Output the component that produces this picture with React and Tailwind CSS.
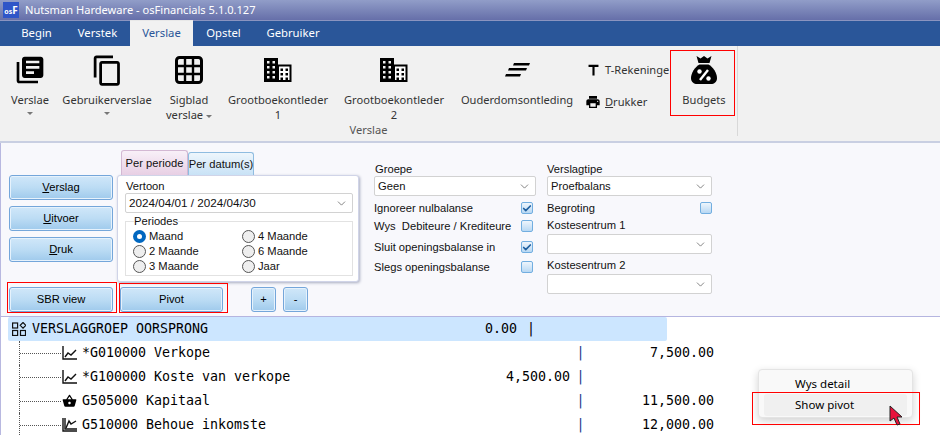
import { ChevronDown, Check } from 'lucide-react'
import { MdLibraryBooks, MdOutlineContentCopy, MdPrint, MdShoppingBasket, MdTitle } from 'react-icons/md'

function BuildingIcon() {
  return (
    <svg width="28" height="24" viewBox="0 0 28 24">
      <path fillRule="evenodd" fill="#000" d="M0 0h14v24H0zM3 3v2.500h2.500V3zm5.500 0v2.500H11V3zM3 8v2.500h2.500V8zm5.500 0v2.500H11V8zM3 13v2.500h2.500V13zm5.500 0v2.500H11V13zM3 18v2.500h2.500V18zm5.500 0v2.500H11V18z" />
      <path fill="#fff" stroke="#000" strokeWidth="2" d="M14 7.500h12.500V23H14z" />
      <path fill="#000" d="M16.500 10.500H19V13h-2.500zM21.500 10.500H24V13h-2.500zM16.500 15H19v2.500h-2.500zM21.500 15H24v2.500h-2.500zM16.500 19.500H19V22h-2.500zM21.500 19.500H24V22h-2.500z" />
    </svg>
  )
}

function GridIcon() {
  return (
    <svg width="28" height="28" viewBox="0 0 28 28">
      <rect x="1.500" y="1.500" width="25" height="25" rx="3" fill="none" stroke="#000" strokeWidth="3" />
      <path d="M10 1v26M18 1v26M1 10h26M1 18h26" stroke="#000" strokeWidth="2.400" />
    </svg>
  )
}

function AgingIcon() {
  return (
    <svg width="25" height="14" viewBox="0 0 25 14" fill="#000">
      <path d="M9 0h16l-1 2.500H8zM4 5h18l-1 2.500H3zM1 11h15l-1 2.500H0z" />
    </svg>
  )
}

function BudgetBag() {
  return (
    <svg width="26" height="28" viewBox="0 0 26 28">
      <path d="M5.500 0l4 2.500L13 0l3.500 2.500 4-2.500-2 7h-11z" fill="#000" />
      <path d="M8.500 8.500h9C22 11 26 17 26 22c0 4-3 6-6 6H6c-3 0-6-2-6-6 0-5 4-11 8.500-13.500z" fill="#000" />
      <path d="M9 24l8-10" stroke="#fff" strokeWidth="2.400" />
      <circle cx="8.500" cy="15.500" r="2.200" fill="#fff" />
      <circle cx="17.500" cy="22.500" r="2.200" fill="#fff" />
    </svg>
  )
}

function TreeChart({ steep }) {
  return (
    <svg width="15" height="14" viewBox="0 0 15 14" fill="none" stroke="#111" strokeWidth="1.400">
      <path d={steep ? 'M1 0v13h14M3 0v11h12' : 'M1 0v13h14'} />
      <path d={steep ? 'M4 10l3-7 2 3 5-3' : 'M3 11l3-4 3 2 5-5'} />
    </svg>
  )
}

function GroupIcon() {
  return (
    <svg width="14" height="14" viewBox="0 0 14 14" fill="none" stroke="#111" strokeWidth="1.200">
      <rect x="0.600" y="1" width="5" height="5" />
      <rect x="0.600" y="8.500" width="5" height="5" />
      <rect x="8.500" y="8.500" width="5" height="5" />
      <path d="M11 0.500l2.800 2.800L11 6.100 8.200 3.300z" />
    </svg>
  )
}

function RibbonItem({ w, icon, label, second, caret }) {
  return (
    <div className={`${w} shrink-0 flex flex-col items-center pt-[9px]`}>
      <div className="h-[30px] flex items-center justify-center">{icon}</div>
      <div className="mt-[7px] leading-[15px] text-center whitespace-nowrap">{label}</div>
      {second && <div className="leading-[15px] text-center whitespace-nowrap">{second}</div>}
      {caret && <div className="mt-[5px] w-0 h-0 border-x-[3px] border-x-transparent border-t-[3px] border-t-[#777]" />}
    </div>
  )
}

function BlueButton({ className, children }) {
  return (
    <button className={`${className} h-[25px] shrink-0 rounded-[3px] border border-[#74a6da] bg-linear-to-b from-[#d0e7f9] via-[#bcdcf4] to-[#9fcaec] text-center text-black shadow-[inset_0_0_0_1px_#e6f2fc]`}>
      {children}
    </button>
  )
}

function Combo({ w, className, children }) {
  return (
    <div className={`${w} ${className ?? ''} h-[20px] flex items-center justify-between bg-white border border-[#d2d2d2] rounded-[2px] pl-[3px] pr-[4px]`}>
      <span className="whitespace-nowrap">{children}</span>
      <ChevronDown size={13} strokeWidth={1.200} color="#444" />
    </div>
  )
}

function Radio({ on, children }) {
  return (
    <div className="h-[15px] flex items-center gap-[3px]">
      {on ? (
        <span className="w-[13px] h-[13px] rounded-full bg-[#0067c0] flex items-center justify-center">
          <span className="w-[5px] h-[5px] rounded-full bg-white" />
        </span>
      ) : (
        <span className="w-[13px] h-[13px] rounded-full border border-[#555] bg-[#eeeeee]" />
      )}
      <span>{children}</span>
    </div>
  )
}

function CheckBox({ on }) {
  return (
    <span className="w-[12px] h-[12px] shrink-0 rounded-[2px] border border-[#72aee0] bg-linear-to-b from-[#eef5fc] to-[#b8d8f3] flex items-center justify-center">
      {on && <Check size={11} strokeWidth={4} color="#1f5f9f" />}
    </span>
  )
}

function CheckRow({ label, on, h, w }) {
  return (
    <div className={`${h} ${w} flex items-center justify-between whitespace-pre`}>
      <span>{label}</span>
      <CheckBox on={on} />
    </div>
  )
}

const rows = [
  { icon: <TreeChart />, name: '*G010000 Verkope', debit: '', credit: '7,500.00' },
  { icon: <TreeChart />, name: '*G100000 Koste van verkope', debit: '4,500.00', credit: '' },
  { icon: <MdShoppingBasket size={16} color="#000" />, name: 'G505000 Kapitaal', debit: '', credit: '11,500.00' },
  { icon: <TreeChart steep />, name: 'G510000 Behoue inkomste', debit: '', credit: '12,000.00' },
]

export default function App() {
  return (
    <div className="relative w-[940px] h-[435px] overflow-hidden bg-white text-[11.100px] text-[#1a1a1a] font-['Noto_Sans',sans-serif]">
      {/* Title bar */}
      <div className="h-[21px] flex items-center bg-linear-to-b from-[#919dc8] to-[#666fa9] border-b border-[#8a94c0]">
        <div className="ml-[3px] w-[16px] h-[16px] bg-[#2f55c8] text-white flex items-baseline justify-center font-bold leading-[16px]">
          <span className="text-[7px]">os</span>
          <span className="text-[10px]">F</span>
        </div>
        <span className="ml-[6px] text-white">Nutsman Hardeware - osFinancials 5.1.0.127</span>
      </div>

      {/* Tabs */}
      <div className="h-[25px] pl-[8px] flex bg-[#2a5699] text-white text-[11.300px]">
        {[
          ['Begin', 'w-[57px]'],
          ['Verstek', 'w-[65px]'],
          ['Verslae', 'w-[63px]'],
          ['Opstel', 'w-[61px]'],
          ['Gebruiker', 'w-[78px]'],
        ].map(([t, w]) => (
          <div
            key={t}
            className={`${w} flex items-center justify-center ${t === 'Verslae' ? 'bg-[#f1f1f1] text-[#2a5699] -mt-[1px] border-t border-[#e8e8e8]' : ''}`}
          >
            {t}
          </div>
        ))}
      </div>

      {/* Ribbon */}
      <div className="h-[97px] bg-[#f1f1f1] border-b-2 border-[#c9cfe2] flex text-[#333]">
        <div className="w-[738px] shrink-0 flex flex-col border-r border-[#d8d8d8] mb-[5px]">
          <div className="h-[81px] pl-[4px] flex">
            <RibbonItem w="w-[52px]" icon={<MdLibraryBooks size={32} color="#000" />} label="Verslae" caret />
            <RibbonItem w="w-[102px]" icon={<MdOutlineContentCopy size={33} color="#000" />} label="Gebruikerverslae" caret />
            <RibbonItem w="w-[62px]" icon={<GridIcon />} label="Sigblad" second={<span>verslae <span className="inline-block align-middle w-0 h-0 border-x-[3px] border-x-transparent border-t-[3px] border-t-[#777]" /></span>} />
            <RibbonItem w="w-[116px]" icon={<BuildingIcon />} label="Grootboekontleder" second="1" />
            <RibbonItem w="w-[116px]" icon={<BuildingIcon />} label="Grootboekontleder" second="2" />
            <RibbonItem w="w-[130px]" icon={<AgingIcon />} label="Ouderdomsontleding" />
            <div className="w-[88px] shrink-0 pl-[3px] pt-[15px] overflow-hidden whitespace-nowrap">
              <div className="h-[18px] flex items-center gap-[3px]">
                <MdTitle size={17} color="#000" />
                <span>T-Rekeninge</span>
              </div>
              <div className="mt-[14px] h-[18px] flex items-center gap-[4px]">
                <MdPrint size={16} color="#000" />
                <span><span className="underline">D</span>rukker</span>
              </div>
            </div>
            <RibbonItem w="w-[68px]" icon={<BudgetBag />} label="Budgets" />
          </div>
          <div className="text-center text-[#555] leading-[15px]">Verslae</div>
        </div>
      </div>

      {/* Options panel */}
      <div className="h-[174px] bg-[#f8f8fc] border-l border-[#b8b8e0] border-b border-b-[#b5b5e0] flex text-[#111] text-[11.200px] font-['Liberation_Sans',sans-serif]">
        <div className="w-[373px] shrink-0 pl-[8px] pt-[7px]">
          <div className="h-[125px] flex">
            <div className="w-[108px] shrink-0 pt-[25px] flex flex-col gap-[6px]">
              <BlueButton className="w-[104px]"><span className="underline">V</span>erslag</BlueButton>
              <BlueButton className="w-[104px]"><span className="underline">U</span>itvoer</BlueButton>
              <BlueButton className="w-[104px]"><span className="underline">D</span>ruk</BlueButton>
            </div>
            <div>
              <div className="h-[25px] flex items-end pl-[4px] whitespace-nowrap">
                <div className="w-[67px] h-[25px] flex items-center justify-center rounded-t-[3px] border border-b-0 border-[#d3b8d3] bg-linear-to-b from-[#f8f0f8] to-[#e8cfe4]">Per periode</div>
                <div className="w-[66px] h-[23px] flex items-center justify-center rounded-t-[3px] border border-b-0 border-[#8fbce0] bg-linear-to-b from-[#eef6fc] to-[#c8e2f6]">Per datum(s)</div>
              </div>
              <div className="w-[242px] h-[107px] px-[7px] pt-[3px] bg-white rounded-[3px] border border-[#d0d4e8] shadow-[1px_1px_3px_#a8acc0]">
                <div className="pl-[1px] leading-[14px]">Vertoon</div>
                <Combo w="w-[228px]" className="text-[11.700px]">2024/04/01 / 2024/04/30</Combo>
                <fieldset className="mt-[2px] w-[228px] h-[61px] border border-[#e2e2e2] pl-[7px]">
                  <legend className="ml-[1px] leading-[13px]">Periodes</legend>
                  <div className="pt-[1px] grid grid-cols-[109px_1fr]">
                    <Radio on>Maand</Radio>
                    <Radio>4 Maande</Radio>
                    <Radio>2 Maande</Radio>
                    <Radio>6 Maande</Radio>
                    <Radio>3 Maande</Radio>
                    <Radio>Jaar</Radio>
                  </div>
                </fieldset>
              </div>
            </div>
          </div>
          <div className="mt-[12px] flex">
            <BlueButton className="w-[104px]">SBR view</BlueButton>
            <BlueButton className="ml-[7px] w-[103px]">Pivot</BlueButton>
            <BlueButton className="ml-[28px] w-[25px]">+</BlueButton>
            <BlueButton className="ml-[7px] w-[25px]">-</BlueButton>
          </div>
        </div>

        <div className="w-[173px] shrink-0 pt-[19px]">
          <div className="pl-[1px] leading-[14px]">Groepe</div>
          <Combo w="w-[162px]">Geen</Combo>
          <CheckRow label="Ignoreer nulbalanse" on h="mt-[3px] h-[18px]" w="w-[159px]" />
          <CheckRow label="Wys  Debiteure / Krediteure" h="h-[18px]" w="w-[159px]" />
          <CheckRow label="Sluit openingsbalanse in" on h="mt-[3px] h-[18px]" w="w-[159px]" />
          <CheckRow label="Slegs openingsbalanse" h="mt-[2px] h-[18px]" w="w-[159px]" />
        </div>

        <div className="w-[170px] shrink-0 pt-[19px]">
          <div className="leading-[14px]">Verslagtipe</div>
          <Combo w="w-[165px]">Proefbalans</Combo>
          <CheckRow label="Begroting" h="mt-[3px] h-[18px]" w="w-[165px]" />
          <div className="h-[16px] leading-[16px]">Kostesentrum 1</div>
          <div className="mt-[1px]"><Combo w="w-[165px]" /></div>
          <div className="mt-[3px] h-[17px] leading-[17px]">Kostesentrum 2</div>
          <Combo w="w-[165px]" />
        </div>
      </div>

      {/* Tree list */}
      <div className="border-l border-[#b8b8e0] font-['DejaVu_Sans_Mono',monospace] text-[13.300px] text-black">
        <div className="ml-[7px] w-[659px] h-[24px] rounded-[2px] bg-[#cce6ff] flex items-center pl-[4px]">
          <GroupIcon />
          <span className="ml-[6px] w-[176px] whitespace-pre">VERSLAGGROEP OORSPRONG</span>
          <span className="w-[309px] text-right">0.00</span>
          <span className="ml-[10px]">|</span>
        </div>
        {rows.map((r) => (
          <div key={r.name} className="h-[24px] flex items-center">
            <div className="ml-[18px] h-full w-[42px] shrink-0 border-l border-dotted border-[#555] flex items-center">
              <div className="w-full border-t border-dotted border-[#555]" />
            </div>
            <div className="ml-[1px] w-[15px] shrink-0 flex justify-center">{r.icon}</div>
            <span className="ml-[5px] w-[276px] whitespace-pre">{r.name}</span>
            <span className="w-[212px] text-right">{r.debit}</span>
            <span className="ml-[6.500px] w-[8.500px] text-[#1a3a8a]">|</span>
            <span className="w-[129px] text-right">{r.credit}</span>
          </div>
        ))}
      </div>

      {/* Context menu */}
      <div className="absolute left-[758px] top-[369px] w-[155px] h-[49px] rounded-[4px] bg-[#f9f9f9] border border-[#e4e4e4] shadow-[0_3px_8px_rgba(0,0,0,0.180)] px-[5px] pt-[3px] text-black text-[11.500px]">
        <div className="h-[21px] pl-[31px] flex items-center">Wys detail</div>
        <div className="h-[22px] pl-[31px] flex items-center rounded-[3px] bg-[#f0f0f0]">Show pivot</div>
      </div>

      {/* Annotation boxes */}
      <div className="absolute left-[670px] top-[50px] w-[65px] h-[66px] border border-[#f00]" />
      <div className="absolute left-[7px] top-[282px] w-[110px] h-[31px] border border-[#f00]" />
      <div className="absolute left-[119px] top-[283px] w-[109px] h-[30px] border border-[#f00]" />
      <div className="absolute left-[752px] top-[392px] w-[168px] h-[33px] border border-[#f00]" />

      {/* Mouse cursor */}
      <svg className="absolute left-[889px] top-[405px]" width="15" height="21" viewBox="0 0 15 21">
        <path d="M1 1v15l4-3 3 7 3-1-3-7h5z" fill="#e8123c" stroke="#222" strokeWidth="1" />
      </svg>
    </div>
  )
}
